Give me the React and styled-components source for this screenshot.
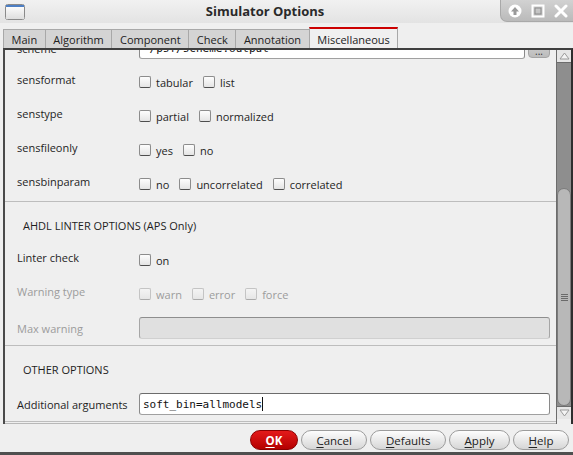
import React from 'react';
import styled, { createGlobalStyle } from 'styled-components';

const GlobalStyle = createGlobalStyle`
  html, body {
    margin: 0;
    padding: 0;
    background: #efefef;
  }
  body {
    font-family: "Open Sans", "Noto Sans", sans-serif;
    font-size: 11px;
    color: #1e1e1e;
  }
`;

const Window = styled.div`
  width: 573px;
  height: 455px;
  display: flex;
  flex-direction: column;
  background: #efefef;
  overflow: hidden;
`;

const TitleBar = styled.div`
  height: 23px;
  flex: none;
  display: flex;
  align-items: center;
  background: linear-gradient(#f1f1f1, #e3e3e3);
`;

const AppIcon = styled.div`
  width: 30px;
  display: flex;
  justify-content: center;
  align-items: center;
`;

const Title = styled.div`
  flex: 1;
  text-align: center;
  font-size: 13px;
  font-weight: 700;
  color: #2a2a2a;
  padding-bottom: 1px;
`;

const WinButtons = styled.div`
  width: 73px;
  height: 22px;
  align-self: flex-start;
  display: flex;
  align-items: center;
  justify-content: space-around;
  padding: 0 1px 0 3px;
  box-sizing: border-box;
  background: linear-gradient(#d2d2d2, #bababa);
  border-left: 1px solid #a9a9a9;
  border-bottom: 1px solid #a9a9a9;
  border-bottom-left-radius: 7px;
`;

const TabBar = styled.div`
  height: 25px;
  flex: none;
  display: flex;
  align-items: flex-end;
  padding-left: 3px;
`;

const Tab = styled.div`
  height: ${({ active }) => (active ? '18px' : '17px')};
  display: flex;
  align-items: center;
  padding: 1px 7.6px 0;
  font-size: 11px;
  color: #222;
  border: 1px solid #a8a8a8;
  border-bottom: none;
  border-right: ${({ active }) => (active ? '1px solid #a8a8a8' : 'none')};
  border-top: ${({ active }) => (active ? '2px solid #cc0000' : '1px solid #a8a8a8')};
  background: ${({ active }) => (active ? '#f0f0f0' : '#d4d4d4')};
`;

const Frame = styled.div`
  height: 376px;
  flex: none;
  margin-left: 3px;
  display: flex;
  border-top: 2px solid #3f3f3f;
  border-left: 2px solid #4a4a4a;
  border-right: 2px solid #2e2e2e;
  box-sizing: border-box;
`;

const Viewport = styled.div`
  flex: 1;
  overflow: hidden;
  border-bottom: 1px solid #b8b8b8;
`;

const Content = styled.div`
  margin-top: -19px;
`;

const Row = styled.div`
  height: 34px;
  display: flex;
  align-items: center;
  padding: 0 6px 0 12px;
`;

const Label = styled.div`
  width: 122px;
  flex: none;
  color: ${({ disabled }) => (disabled ? '#9c9c9c' : '#1e1e1e')};
  margin-bottom: ${({ raised }) => (raised ? '6px' : '0')};
`;

const Checks = styled.div`
  display: flex;
  align-items: center;
  gap: 10px;
`;

const CheckItem = styled.label`
  display: flex;
  align-items: center;
  gap: 5px;
  color: ${({ disabled }) => (disabled ? '#9c9c9c' : '#1e1e1e')};
`;

const Box = styled.span`
  width: 12px;
  height: 12px;
  box-sizing: border-box;
  border: 1px solid ${({ disabled }) => (disabled ? '#c4c4c4' : '#8c8c8c')};
  border-bottom-color: ${({ disabled }) => (disabled ? '#aaaaaa' : '#4e4e4e')};
  border-radius: 2px;
  background: ${({ disabled }) =>
    disabled ? 'linear-gradient(#f4f4f4, #e6e6e6)' : 'linear-gradient(#fdfdfd, #e4e4e4)'};
`;

const Field = styled.div`
  flex: 1;
  height: 22px;
  box-sizing: border-box;
  display: flex;
  align-items: center;
  padding-left: 3px;
  border: 1px solid ${({ disabled }) => (disabled ? '#a6a6a6' : '#8a8a8a')};
  border-top-color: ${({ disabled }) => (disabled ? '#8e8e8e' : '#6c6c6c')};
  border-bottom-color: ${({ disabled }) => (disabled ? '#d0d0d0' : '#a0a0a0')};
  border-radius: 3px;
  background: ${({ disabled }) => (disabled ? '#e0e0e0' : '#ffffff')};
  font-family: "DejaVu Sans Mono", "Liberation Mono", monospace;
  font-size: 11px;
  color: #111;
  overflow: hidden;
  white-space: nowrap;
`;

const Caret = styled.span`
  display: inline-block;
  width: 1px;
  height: 14px;
  background: #111;
`;

const BrowseButton = styled.div`
  width: 22px;
  height: 20px;
  margin-left: 3px;
  border-radius: 4px;
  background: linear-gradient(#d6d6d6, #bcbcbc);
  border: 1px solid #a4a4a4;
  box-sizing: border-box;
  display: flex;
  align-items: flex-end;
  justify-content: center;
  font-size: 10px;
  line-height: 12px;
  color: #333;
`;

const Separator = styled.div`
  height: 1px;
  background: #bdbdbd;
`;

const Heading = styled.div`
  height: 41px;
  box-sizing: border-box;
  padding: 16px 0 0 18px;
  line-height: 16px;
  color: #1e1e1e;
`;

const ScrollBar = styled.div`
  width: 15px;
  flex: none;
  display: flex;
  flex-direction: column;
  padding-bottom: 5px;
  box-sizing: border-box;
  border-left: 1px solid #6c6c6c;
`;

const Arrow = styled.div`
  height: 12px;
  flex: none;
  display: flex;
  align-items: center;
  justify-content: center;
  background: #e6e6e6;
  border-bottom: ${({ up }) => (up ? '1px solid #6c6c6c' : 'none')};
  border-top: ${({ up }) => (up ? 'none' : '1px solid #6c6c6c')};
`;

const Track = styled.div`
  flex: 1;
  background: #8e8e8e;
  display: flex;
  flex-direction: column;
`;

const Thumb = styled.div`
  margin-top: 125px;
  height: 218px;
  box-sizing: border-box;
  background: #b8b8b8;
  border: 1px solid #7b7b7b;
  border-radius: 7px;
  display: flex;
  align-items: center;
  justify-content: center;
`;

const Grip = styled.div`
  width: 7px;
  height: 7px;
  background: repeating-linear-gradient(#6a6a6a 0 1px, transparent 1px 2px);
`;

const ButtonBar = styled.div`
  height: 28px;
  flex: none;
  display: flex;
  align-items: center;
  justify-content: flex-end;
  gap: 3px;
  padding-right: 4px;
  padding-top: 4px;
  box-sizing: border-box;
`;

const Button = styled.button`
  height: 20px;
  padding: 0 14.5px;
  border-radius: 10px;
  font-family: "Open Sans", "Noto Sans", sans-serif;
  font-size: 11.5px;
  font-weight: ${({ primary }) => (primary ? 700 : 400)};
  color: ${({ primary }) => (primary ? '#ffffff' : '#222')};
  border: 1px solid ${({ primary }) => (primary ? '#8a0000' : '#9c9c9c')};
  background: ${({ primary }) =>
    primary ? 'linear-gradient(#e41a1a, #b40000)' : 'linear-gradient(#fdfdfd, #d6d6d6)'};
  min-width: ${({ wide }) => wide || 'auto'};
  display: flex;
  align-items: center;
  justify-content: center;
  u { text-decoration-thickness: 1px; text-underline-offset: 2px; }
`;

const BottomStrip = styled.div`
  height: 3px;
  flex: none;
  background: #4f4f4f;
`;

const Check = ({ label, disabled }) => (
  <CheckItem disabled={disabled}>
    <Box disabled={disabled} />
    {label}
  </CheckItem>
);

const CheckRow = ({ label, items, disabled }) => (
  <Row>
    <Label raised disabled={disabled}>{label}</Label>
    <Checks>
      {items.map((it) => (
        <Check key={it} label={it} disabled={disabled} />
      ))}
    </Checks>
  </Row>
);

const AppGlyph = () => (
  <svg width="20" height="16" viewBox="0 0 20 16">
    <defs>
      <linearGradient id="g" x1="0" y1="0" x2="0" y2="1">
        <stop offset="0" stopColor="#fbfbfb" />
        <stop offset="1" stopColor="#dedede" />
      </linearGradient>
    </defs>
    <rect x="0.5" y="0.5" width="19" height="15" rx="2" fill="#f4f4f4" stroke="#8a8a8a" />
    <rect x="1" y="1" width="18" height="2" fill="#4d7fc4" />
    <rect x="1" y="3" width="18" height="12" fill="url(#g)" />
  </svg>
);

const UpIcon = () => (
  <svg width="14" height="14" viewBox="0 0 14 14">
    <circle cx="7" cy="7" r="6.5" fill="#ffffff" />
    <path d="M7 3 L11 7.5 H8.5 V11 H5.5 V7.5 H3 Z" fill="#9a9a9a" />
  </svg>
);

const MaxIcon = () => (
  <svg width="14" height="14" viewBox="0 0 14 14">
    <rect x="1.5" y="1.5" width="11" height="11" fill="none" stroke="#ffffff" strokeWidth="2" />
    <rect x="4" y="4" width="6" height="6" fill="none" stroke="#8a8a8a" strokeWidth="1" />
  </svg>
);

const CloseIcon = () => (
  <svg width="14" height="14" viewBox="0 0 14 14">
    <path d="M2 2 L12 12 M12 2 L2 12" stroke="#ffffff" strokeWidth="3" strokeLinecap="round" />
  </svg>
);

const Triangle = ({ down }) => (
  <svg width="11" height="8" viewBox="0 0 11 8">
    <path
      d={down ? 'M1 1 H10 L5.5 7 Z' : 'M1 7 H10 L5.5 1 Z'}
      fill="#f4f4f4"
      stroke="#9a9a9a"
      strokeWidth="1"
    />
  </svg>
);

const tabs = ['Main', 'Algorithm', 'Component', 'Check', 'Annotation', 'Miscellaneous'];

export default function App() {
  return (
    <>
      <GlobalStyle />
      <Window>
        <TitleBar>
          <AppIcon>
            <AppGlyph />
          </AppIcon>
          <Title>Simulator Options</Title>
          <WinButtons>
            <UpIcon />
            <MaxIcon />
            <CloseIcon />
          </WinButtons>
        </TitleBar>

        <TabBar>
          {tabs.map((t) => (
            <Tab key={t} active={t === 'Miscellaneous'}>
              {t}
            </Tab>
          ))}
        </TabBar>

        <Frame>
          <Viewport>
            <Content>
              <Row>
                <Label>scheme</Label>
                <Field>~/psf/scheme.output</Field>
                <BrowseButton>...</BrowseButton>
              </Row>
              <CheckRow label="sensformat" items={['tabular', 'list']} />
              <CheckRow label="senstype" items={['partial', 'normalized']} />
              <CheckRow label="sensfileonly" items={['yes', 'no']} />
              <CheckRow label="sensbinparam" items={['no', 'uncorrelated', 'correlated']} />
              <Separator />
              <Heading>AHDL LINTER OPTIONS (APS Only)</Heading>
              <CheckRow label="Linter check" items={['on']} />
              <CheckRow label="Warning type" items={['warn', 'error', 'force']} disabled />
              <Row>
                <Label disabled>Max warning</Label>
                <Field disabled />
              </Row>
              <Separator />
              <Heading>OTHER OPTIONS</Heading>
              <Row>
                <Label>Additional arguments</Label>
                <Field>
                  soft_bin=allmodels
                  <Caret />
                </Field>
              </Row>
              <Separator />
            </Content>
          </Viewport>
          <ScrollBar>
            <Arrow up>
              <Triangle />
            </Arrow>
            <Track>
              <Thumb>
                <Grip />
              </Thumb>
            </Track>
            <Arrow>
              <Triangle down />
            </Arrow>
          </ScrollBar>
        </Frame>

        <ButtonBar>
          <Button primary wide="48px">
            <u>O</u>K
          </Button>
          <Button>
            <u>C</u>ancel
          </Button>
          <Button>
            <u>D</u>efaults
          </Button>
          <Button>
            <u>A</u>pply
          </Button>
          <Button>
            <u>H</u>elp
          </Button>
        </ButtonBar>
        <BottomStrip />
      </Window>
    </>
  );
}
